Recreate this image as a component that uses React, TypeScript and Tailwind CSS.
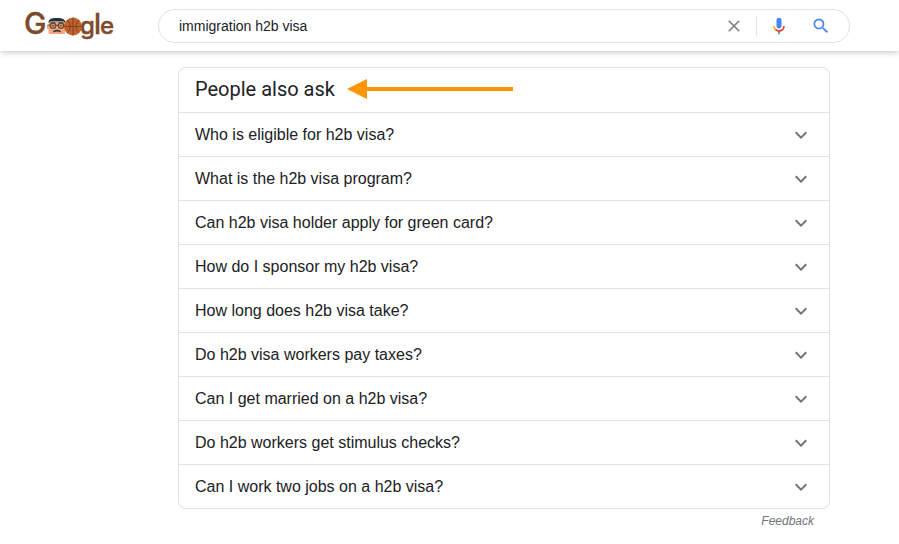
import { useState } from 'react'
import { MdClose, MdExpandMore, MdSearch } from 'react-icons/md'

const questions = [
  'Who is eligible for h2b visa?',
  'What is the h2b visa program?',
  'Can h2b visa holder apply for green card?',
  'How do I sponsor my h2b visa?',
  'How long does h2b visa take?',
  'Do h2b visa workers pay taxes?',
  'Can I get married on a h2b visa?',
  'Do h2b workers get stimulus checks?',
  'Can I work two jobs on a h2b visa?',
]

function Logo() {
  return (
    <svg width="94" height="34" viewBox="-2 -1 94 34" role="img" aria-label="Google" className="block overflow-visible">
      <g fill="#7d4a2a" stroke="#7d4a2a" strokeWidth="0.400" fontFamily="Inter, sans-serif" fontWeight="500">
        <text x="0" y="24" fontSize="30">G</text>
        <text x="56" y="24" fontSize="24">g</text>
        <text x="70" y="24" fontSize="28">l</text>
        <text x="76" y="24" fontSize="24">e</text>
      </g>
      {/* Face */}
      <path d="M25 12h16v12H26c-1 0-1.500-1-1.500-2z" fill="#f3a97f" />
      <path d="M24 15v4M41.500 15v4" stroke="#f3a97f" strokeWidth="2" />
      <path d="M24.500 13c0-4 2.500-5 8.500-5s8.500 1.500 8.500 5l-2-1.500h-13z" fill="#22303a" />
      <path d="M26.500 12.800h5M34.500 12.800h5" stroke="#22303a" strokeWidth="1" />
      <g fill="#e59668" stroke="#6b4630" strokeWidth="1.200">
        <circle cx="29" cy="15.800" r="2.700" />
        <circle cx="37" cy="15.800" r="2.700" />
      </g>
      <path d="M23.500 15h3M31.500 15.300h3M39.500 15H42" stroke="#6b4630" strokeWidth="1.200" />
      <circle cx="29" cy="15.800" r="0.800" fill="#22303a" />
      <circle cx="37" cy="15.800" r="0.800" fill="#22303a" />
      <path d="M29 22.500c0-2 1.500-2.800 4-2.800s4 .8 4 2.800c-1.500-1-2.500-1-4-1s-2.500 0-4 1z" fill="#22303a" />
      {/* Basketball */}
      <circle cx="49" cy="16.500" r="9" fill="#c0622b" />
      <g fill="none" stroke="#7a3f1f" strokeWidth="0.900">
        <path d="M40 16.500h18M49 7.500v18M43 10c4 3.500 4 9.500 0 13M55 10c-4 3.500-4 9.500 0 13" />
      </g>
    </svg>
  )
}

function MicIcon() {
  return (
    <svg width="20" height="20" viewBox="0 0 24 24" aria-hidden="true">
      <path fill="#4285f4" d="m12 15c1.660 0 3-1.310 3-2.970v-7.020c0-1.660-1.340-3.010-3-3.010s-3 1.340-3 3.010v7.020c0 1.660 1.340 2.970 3 2.970z" />
      <path fill="#34a853" d="m11 18.080h2v3.920h-2z" />
      <path fill="#fbbc05" d="m7.050 16.870c-1.270-1.330-2.050-2.830-2.050-4.870h2c0 1.450 0.560 2.420 1.470 3.380v0.320l-1.150 1.180z" />
      <path fill="#ea4335" d="m12 16.930a4.970 5.250 0 0 1-3.540-1.550l-1.410 1.490c1.260 1.340 3.020 2.130 4.950 2.130 3.870 0 6.990-2.920 6.990-7h-1.990c0 2.920-2.240 4.930-5 4.930z" />
    </svg>
  )
}

function Arrow() {
  return (
    <svg width="166" height="20" viewBox="0 0 166 20" aria-hidden="true">
      <path d="M0 10 20 0v8h146v4H20v8z" fill="#ff9500" />
    </svg>
  )
}

function SearchBar() {
  const [query, setQuery] = useState('immigration h2b visa')

  return (
    <form
      role="search"
      onSubmit={(e) => e.preventDefault()}
      className="flex h-[34px] max-w-[692px] flex-1 items-center rounded-full border border-[#dfe1e5] pr-[18px] pl-5"
    >
      <input
        type="text"
        aria-label="Search"
        value={query}
        onChange={(e) => setQuery(e.target.value)}
        className="min-w-0 flex-1 text-sm text-[#202124] outline-none"
      />
      <button type="button" aria-label="Clear" onClick={() => setQuery('')} className="mr-3 text-[#80868b]">
        <MdClose size={20} />
      </button>
      <span className="h-5 w-px bg-[#dfe1e5]" />
      <button type="button" aria-label="Search by voice" className="ml-3">
        <MicIcon />
      </button>
      <button type="submit" aria-label="Google Search" className="ml-[22px] text-[#4285f4]">
        <MdSearch size={20} />
      </button>
    </form>
  )
}

export default function App() {
  const [open, setOpen] = useState<string | null>(null)

  return (
    <div className="min-h-screen bg-white font-['Liberation_Sans',Arial,sans-serif] text-[#202124]">
      <header className="flex items-center gap-[42px] bg-white pt-[9px] pr-12 pb-2 pl-[22px] shadow-[0_1px_6px_rgba(32,33,36,0.28)]">
        <a href="#" className="shrink-0">
          <Logo />
        </a>
        <SearchBar />
      </header>

      <main className="mt-4 mr-4 ml-[178px] max-w-[652px]">
        <section className="rounded-lg border border-[#dfe1e5]">
          <div className="flex h-11 items-center gap-3 px-4 pb-0.5">
            <h2 className="font-[Roboto,sans-serif] text-xl">People also ask</h2>
            <Arrow />
          </div>
          {questions.map((question) => (
            <button
              key={question}
              type="button"
              aria-expanded={open === question}
              onClick={() => setOpen(open === question ? null : question)}
              className="flex h-11 w-full items-center justify-between border-t border-[#dfe1e5] px-4 text-left text-base"
            >
              {question}
              <MdExpandMore size={24} className="text-[#70757a]" />
            </button>
          ))}
        </section>
        <div className="flex justify-end px-4 pt-1">
          <a href="#" className="text-xs text-[#70757a] italic">Feedback</a>
        </div>
      </main>
    </div>
  )
}
